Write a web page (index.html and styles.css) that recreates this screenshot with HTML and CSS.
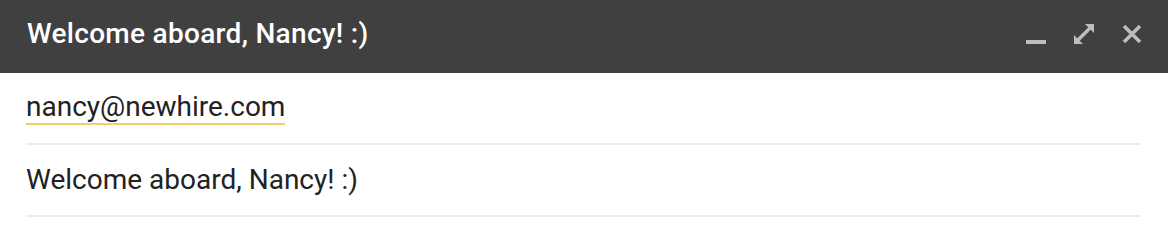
FILE: index.html
```html
<!DOCTYPE html>
<html lang="en">
<head>
<meta charset="utf-8">
<title>Compose</title>
<link rel="stylesheet" href="styles.css">
</head>
<body>
<div class="compose">
  <header class="titlebar">
    <h1 class="title">Welcome aboard, Nancy! :)</h1>
    <div class="controls">
      <button class="ctl" aria-label="Minimize">
        <svg width="20" height="20" viewBox="0 0 20 20"><rect x="0" y="16" width="20" height="4" fill="currentColor"/></svg>
      </button>
      <button class="ctl" aria-label="Expand">
        <svg width="22" height="22" viewBox="0 0 22 22"><path d="M5 17L17 5" stroke="currentColor" stroke-width="3.4" fill="none"/><path d="M12 1h9v9zM1 12v9h9z" fill="currentColor"/></svg>
      </button>
      <button class="ctl" aria-label="Close">
        <svg width="20" height="20" viewBox="0 0 20 20"><path d="M2 2L18 18M18 2L2 18" stroke="currentColor" stroke-width="3.6" fill="none"/></svg>
      </button>
    </div>
  </header>
  <div class="fields">
    <div class="field">
      <span class="recipient">nancy@newhire.com</span>
    </div>
    <div class="field">
      <span class="subject">Welcome aboard, Nancy! :)</span>
    </div>
  </div>
</div>
</body>
</html>
```

FILE: styles.css
```css
* { box-sizing: border-box; }
html, body { margin: 0; padding: 0; background: #fff; }
body { font-family: Roboto, "Liberation Sans", Arial, sans-serif; }

.compose { width: 1168px; }

.titlebar {
  height: 73px;
  background: #404040;
  display: flex;
  align-items: center;
  justify-content: space-between;
  padding: 0 12px 6px 27px;
}
.title {
  margin: 0;
  color: #fff;
  font-size: 28px;
  font-weight: 500;
  letter-spacing: 0.3px;
  line-height: 28px;
}
.controls { display: flex; align-items: center; }
.ctl {
  background: none;
  border: 0;
  padding: 0;
  color: #bdbdbd;
  display: flex;
  align-items: center;
  justify-content: center;
  width: 48px;
  height: 30px;
}

.fields { padding: 0 28px 0 26px; }
.field {
  height: 72px;
  border-bottom: 2px solid #ececec;
  display: flex;
  align-items: center;
  font-size: 28px;
  line-height: 30px;
  color: #222;
}
.recipient {
  border-bottom: 2px solid #f2cd6a;
  padding-bottom: 1px;
}
```
